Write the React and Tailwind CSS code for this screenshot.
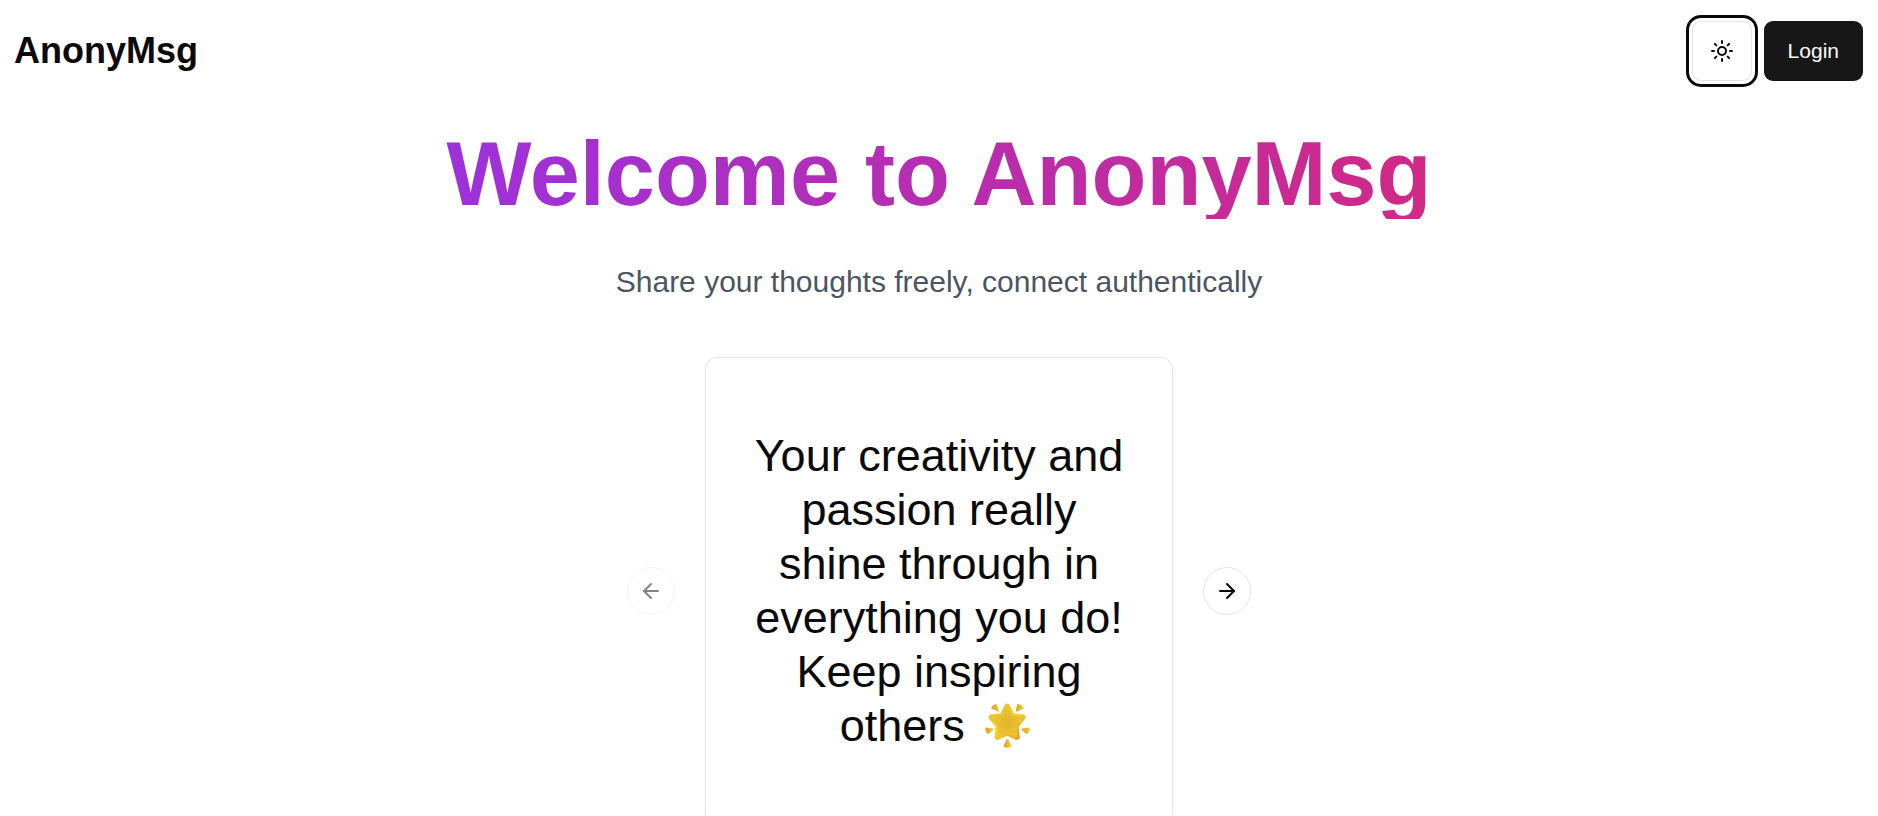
import { ArrowLeft, ArrowRight, Sun } from "lucide-react";

function GlowingStar() {
  return (
    <svg
      role="img"
      aria-label="glowing star"
      viewBox="0 0 45 45"
      className="mx-2 inline-block size-[45px] align-[-7px]"
    >
      <defs>
        <radialGradient
          id="star-body"
          gradientUnits="userSpaceOnUse"
          cx="22.5"
          cy="19"
          r="19"
        >
          <stop offset="0" stopColor="#dfb530" />
          <stop offset="0.55" stopColor="#eabf2f" />
          <stop offset="1" stopColor="#f3c930" />
        </radialGradient>
        <linearGradient
          id="star-edge"
          gradientUnits="userSpaceOnUse"
          x1="6"
          y1="6"
          x2="34"
          y2="36"
        >
          <stop offset="0" stopColor="#e9b833" />
          <stop offset="0.5" stopColor="#f7d32b" />
          <stop offset="1" stopColor="#dba337" />
        </linearGradient>
        <linearGradient id="star-ray" x1="0" y1="0" x2="1" y2="0">
          <stop offset="0" stopColor="#dda62f" />
          <stop offset="1" stopColor="#f2c62a" />
        </linearGradient>
      </defs>
      <path
        d="M22.2 3.4 L27 12.8 L37.8 14.2 L31 22.8 L32 34.2 L22.2 29.8 L12.4 34.2 L13.4 22.8 L6.4 14.2 L17.4 12.8 Z"
        fill="url(#star-body)"
        stroke="url(#star-edge)"
        strokeWidth="5.6"
        strokeLinejoin="round"
      />
      <path
        d="M22.2 4.6 L26.6 13.8 L35.8 15 L29.8 22.8 L30.8 32.4 L22.2 28.6 L13.8 32.4 L14.6 22.8 L8.4 15 L17.8 13.8 Z"
        fill="url(#star-body)"
        stroke="url(#star-body)"
        strokeWidth="2.6"
        strokeLinejoin="round"
      />
      <g
        fill="url(#star-ray)"
        stroke="url(#star-ray)"
        strokeWidth="2"
        strokeLinejoin="round"
      >
        <path d="M10.8 2 L13 7.6 L7.2 4.8 Q8.4 2.6 10.8 2 Z" />
        <path d="M33 2 L31.8 7.6 L37.6 4.8 Q36 2.6 33 2 Z" />
        <path d="M1.2 25.4 L7.4 26.4 L3.2 30 Q1.6 28.6 1.2 25.4 Z" />
        <path d="M43.8 25.4 L37.6 26.4 L41.8 30 Q43.4 28.6 43.8 25.4 Z" />
        <path d="M22.4 37 L25.2 43 Q22.4 44.4 19.6 43 Z" />
      </g>
    </svg>
  );
}

function Header() {
  return (
    <header className="flex items-center justify-between py-[21px] pr-[15px] pl-3.5">
      <a href="#home" className="text-4xl font-bold">
        AnonyMsg
      </a>
      <div className="flex items-center gap-3">
        <button
          type="button"
          aria-label="Toggle theme"
          className="flex size-15 items-center justify-center rounded-[9px] border border-[#e5e5e5] bg-white ring-[3px] ring-[#0a0a0a] ring-offset-[3px] ring-offset-white"
        >
          <Sun className="size-6" />
        </button>
        <button
          type="button"
          className="h-15 rounded-[9px] bg-[#171717] px-6 text-[21px] text-[#fafafa]"
        >
          Login
        </button>
      </div>
    </header>
  );
}

function Carousel() {
  return (
    <section aria-label="Messages" className="flex items-center justify-center gap-[30px]">
      <button
        type="button"
        aria-label="Previous message"
        disabled
        className="flex size-12 items-center justify-center rounded-full border border-[#e5e5e5] bg-white opacity-50"
      >
        <ArrowLeft className="size-6" />
      </button>
      <article className="flex aspect-square w-full max-w-[468px] items-center justify-center rounded-xl border border-[#e5e5e5] bg-white p-9 text-center text-[45px] leading-[54px] shadow-xs">
        <p>
          Your creativity and passion really shine through in everything you do! Keep inspiring
          others <GlowingStar />
        </p>
      </article>
      <button
        type="button"
        aria-label="Next message"
        className="flex size-12 items-center justify-center rounded-full border border-[#e5e5e5] bg-white"
      >
        <ArrowRight className="size-6" />
      </button>
    </section>
  );
}

export default function App() {
  return (
    <div className="min-h-screen bg-white font-['Liberation_Sans',Arial,sans-serif] text-[#0a0a0a]">
      <Header />
      <main className="mx-auto max-w-[1344px] pt-[27px]">
        <h1 className="bg-linear-to-r/srgb from-[#9333ea] to-[#db2777] bg-clip-text text-center text-[90px] leading-[90px] font-bold text-transparent">
          Welcome to AnonyMsg
        </h1>
        <p className="mt-9 mb-12 text-center text-3xl leading-[54px] text-[#4b5563]">
          Share your thoughts freely, connect authentically
        </p>
        <Carousel />
      </main>
    </div>
  );
}
